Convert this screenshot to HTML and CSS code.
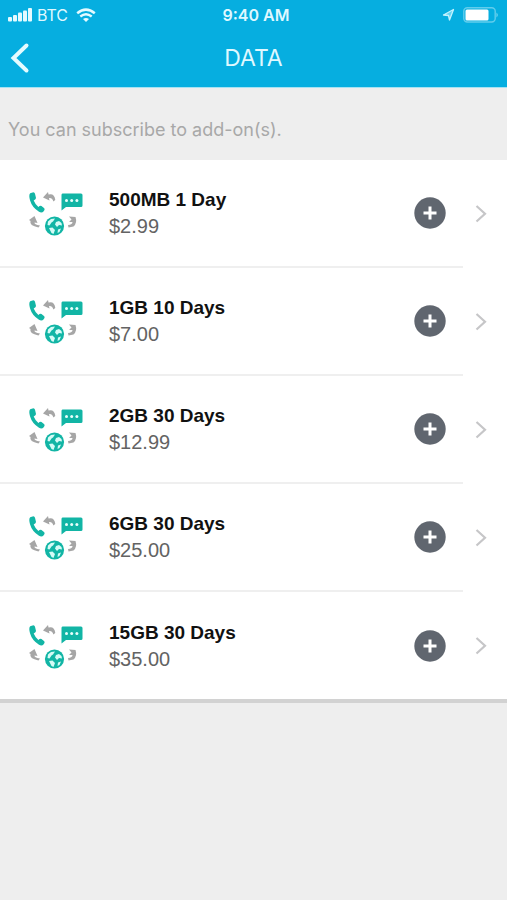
FILE: index.html
```html
<!DOCTYPE html>
<html lang="en">
<head>
<meta charset="utf-8">
<title>Data</title>
<link rel="stylesheet" href="styles.css">
</head>
<body>
<svg class="defs" aria-hidden="true">
  <symbol id="services" viewBox="0 0 60 50">
    <g fill="#12b5a5">
      <path d="M3.2 5.2 6.4 4.3Q7.6 4.3 8 5.8L9 10Q9 11.5 6.7 12.4 8.2 16.3 11.4 18.9 13 17.3 14.5 17.9L17.3 20.2Q18.2 21.6 16.7 23.2 14.8 25.3 12 23.7 5 19.3 3 12.2 1.500 7 3.200 5.200Z"/>
      <path d="M35.500 5.500H54Q55.500 5.500 55.500 7V17.500Q55.500 19 54 19H39L34.500 22.500V7Q34.500 5.500 35.500 5.500Z"/>
      <circle cx="27.500" cy="38" r="9.600"/>
    </g>
    <g fill="#e9fffc"><circle cx="39.500" cy="12.500" r="1.500"/><circle cx="44.700" cy="12.500" r="1.500"/><circle cx="49.900" cy="12.500" r="1.500"/></g>
    <path fill="#d5fbf6" d="M21 33.500 24 31 28 30.500 26 33.500 24.500 34.500 22.500 37.500 20.500 37ZM29 34 32 33 34.500 35 35 37.500 32 37 30 39 28 36.500ZM22 40 25.500 39.500 28 42 26.500 46 24.500 45ZM31 41.500 34 40.500 32.500 44 30.500 45Z"/>
    <g fill="#a6a6a6">
      <path d="M16 9.500 21 4 21.500 6.500Q27.500 5 28.300 12L26.300 13.500Q25.500 9.500 22 10L22.500 12.500Z"/>
      <path d="M7.500 28 2 32 3.500 33Q2 37.500 11.500 39.500L13 37.500Q7 36.500 7.500 34.500L10.500 35Z"/>
      <path d="M42 28.500 48.500 29Q50.500 35 46.500 38.500L41.500 39.500 41 37Q45.500 36.500 45.500 34L42 34 44.500 31.500Z"/>
    </g>
  </symbol>
  <symbol id="add" viewBox="0 0 32 32">
    <circle cx="16" cy="16" r="15.700" fill="#60666f"/>
    <path d="M16 9.500V22.500M9.500 16H22.500" stroke="#fff" stroke-width="3"/>
  </symbol>
  <symbol id="chevron" viewBox="0 0 12 20">
    <path d="M1.500 2 10 9.700 1.500 17.500" fill="none" stroke="#c6c6c8" stroke-width="2.200"/>
  </symbol>
</svg>

<header class="header">
  <div class="status">
    <div class="carrier">
      <svg width="24" height="16" viewBox="0 0 24 16" fill="#e4faff"><rect x="0" y="10" width="4" height="4.500" rx="1"/><rect x="5" y="8" width="4" height="6.500" rx="1"/><rect x="10" y="5.500" width="4" height="9" rx="1"/><rect x="15" y="3.500" width="4" height="11" rx="1"/><rect x="20" y="1" width="4" height="13.500" rx="1"/></svg>
      <span class="network">BTC</span>
      <svg width="20" height="15" viewBox="0 0 20 15" fill="none" stroke="#e4faff"><path d="M1.200 5.200Q10-1.800 18.800 5.200" stroke-width="2.600"/><path d="M4.300 8.500Q10 4 15.700 8.500" stroke-width="2.400"/><path d="M7 11Q10 8.800 13 11L10 14Z" fill="#e4faff" stroke="none"/></svg>
    </div>
    <span class="time">9:40 AM</span>
    <div class="power">
      <svg width="13" height="14" viewBox="0 0 13 14"><path d="M1.500 7 11.500 1.500 7.500 12 6.500 7.500Z" fill="#62d4f3" stroke="#c5f2fe" stroke-width="1.300" stroke-linejoin="round"/></svg>
      <svg width="36" height="16" viewBox="0 0 36 16"><rect x=".8" y=".8" width="31.400" height="14.200" rx="3.500" fill="none" stroke="#62cdec" stroke-width="1.400"/><rect x="2.500" y="2.500" width="23" height="11" rx="1.500" fill="#fff"/><path d="M33.500 5.500Q36 8 33.500 10.500Z" fill="#7ad9f2"/></svg>
    </div>
  </div>
  <nav class="nav">
    <svg class="back" width="20" height="32" viewBox="0 0 20 32"><path d="M16.500 3.500 3.500 16 16.500 28.500" fill="none" stroke="#e4fbff" stroke-width="4" stroke-linecap="round"/></svg>
    <h1 class="heading">DATA</h1>
    <span></span>
  </nav>
</header>

<main>
  <p class="intro">You can subscribe to add-on(s).</p>
  <ul class="plans">
    <li class="plan">
      <div class="plan-body"><svg class="services"><use href="#services"/></svg><div class="details"><h2>500MB 1 Day</h2><p>$2.99</p></div><svg class="add"><use href="#add"/></svg></div>
      <svg class="chevron"><use href="#chevron"/></svg>
    </li>
    <li class="plan">
      <div class="plan-body"><svg class="services"><use href="#services"/></svg><div class="details"><h2>1GB 10 Days</h2><p>$7.00</p></div><svg class="add"><use href="#add"/></svg></div>
      <svg class="chevron"><use href="#chevron"/></svg>
    </li>
    <li class="plan">
      <div class="plan-body"><svg class="services"><use href="#services"/></svg><div class="details"><h2>2GB 30 Days</h2><p>$12.99</p></div><svg class="add"><use href="#add"/></svg></div>
      <svg class="chevron"><use href="#chevron"/></svg>
    </li>
    <li class="plan">
      <div class="plan-body"><svg class="services"><use href="#services"/></svg><div class="details"><h2>6GB 30 Days</h2><p>$25.00</p></div><svg class="add"><use href="#add"/></svg></div>
      <svg class="chevron"><use href="#chevron"/></svg>
    </li>
    <li class="plan">
      <div class="plan-body"><svg class="services"><use href="#services"/></svg><div class="details"><h2>15GB 30 Days</h2><p>$35.00</p></div><svg class="add"><use href="#add"/></svg></div>
      <svg class="chevron"><use href="#chevron"/></svg>
    </li>
  </ul>
</main>
</body>
</html>
```
FILE: styles.css
```css
* { box-sizing: border-box; }
body, h1, h2, p, ul { margin: 0; padding: 0; }
body {
  min-height: 900px;
  background: #eee;
  font-family: "Liberation Sans", Arial, sans-serif;
}
svg { display: block; flex: none; }
.defs { display: none; }

.header {
  height: 88px;
  background: #06aee0;
  border-bottom: 1px solid #a5e2f3;
  color: #dff8ff;
}
.status {
  display: grid;
  grid-template-columns: 1fr auto 1fr;
  align-items: center;
  height: 30px;
  padding: 0 8px;
}
.carrier { display: flex; align-items: center; gap: 5px; }
.network { width: 31px; margin-right: 3px; font: 16px/20px Inter, sans-serif; letter-spacing: -.1px; }
.time { padding-left: 5px; font: 600 16px/20px Inter, sans-serif; }
.power { display: flex; align-items: center; justify-content: flex-end; gap: 8px; }
.nav {
  display: grid;
  grid-template-columns: 1fr auto 1fr;
  align-items: center;
  height: 56px;
}
.back { margin-left: 10px; }
.heading { font: 400 23px/30px Inter, sans-serif; }

.intro {
  height: 72px;
  padding: 30px 8px 0;
  color: #a8a8a8;
  font: 18px/24px Inter, sans-serif;
}

.plans {
  list-style: none;
  background: #fff;
  border-bottom: 4px solid #d2d2d2;
}
.plan { display: flex; align-items: center; height: 108px; }
.plan-body {
  display: flex;
  align-items: center;
  width: 463px;
  height: 108px;
  padding: 0 17px 0 27px;
  border-bottom: 2px solid #efefef;
}
.plan:last-child, .plan:last-child .plan-body { height: 107px; border-bottom: 0; }
.services { width: 60px; height: 50px; }
.details { flex: 1; margin-left: 22px; }
.details h2 { color: #111; font-size: 19px; line-height: 26px; }
.details p { color: #636363; font-size: 20px; line-height: 26px; }
.add { width: 32px; height: 32px; }
.chevron { width: 12px; height: 20px; margin-left: 12px; }
```
